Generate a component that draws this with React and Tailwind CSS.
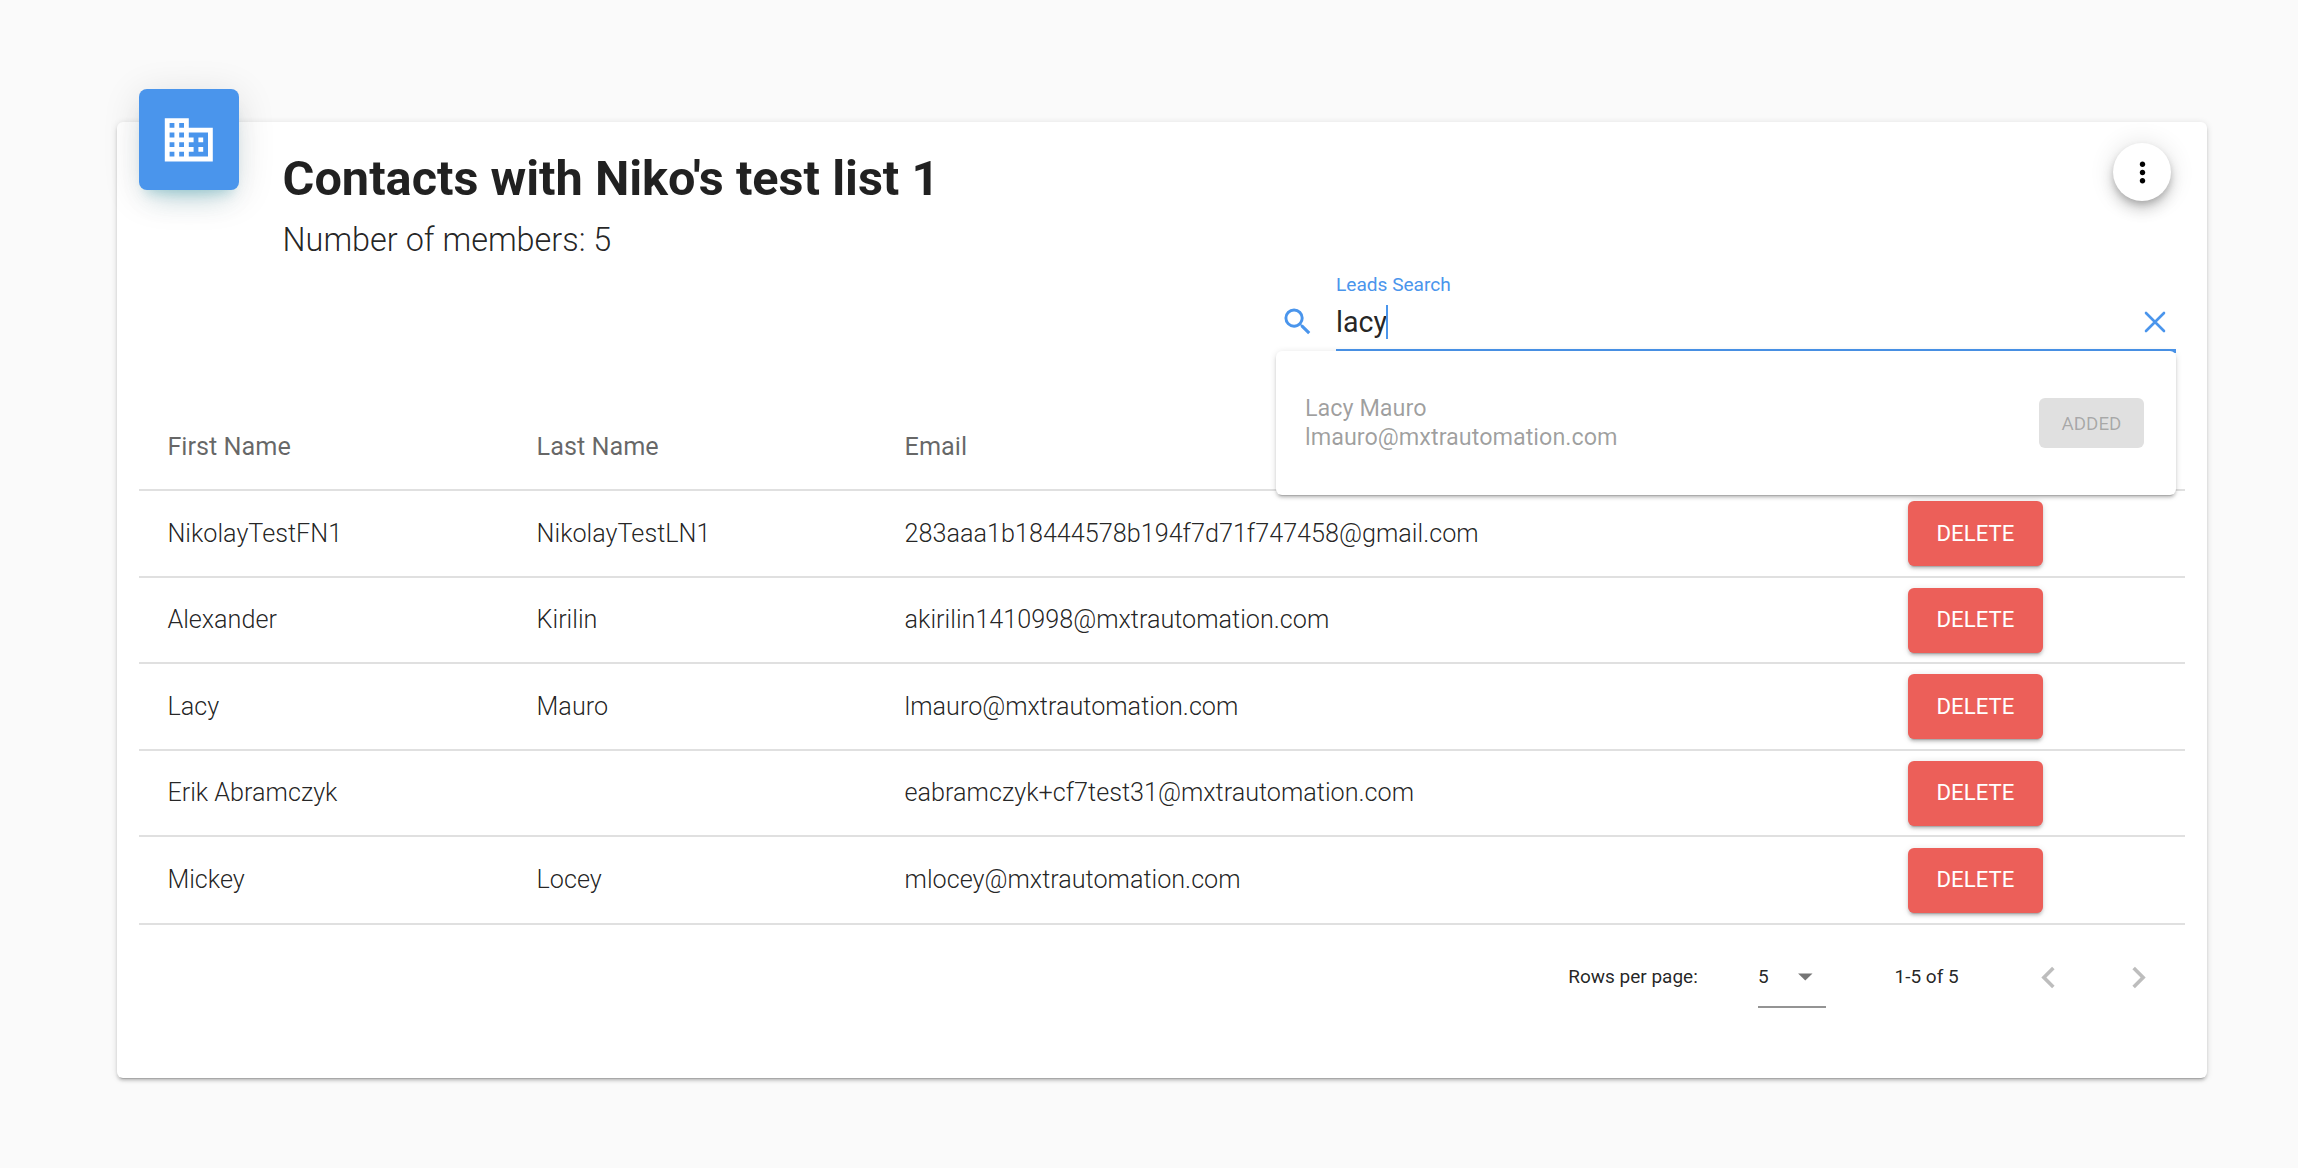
import React from "react";
import {
  MdArrowDropDown,
  MdBusiness,
  MdChevronLeft,
  MdChevronRight,
  MdMoreVert,
  MdSearch,
} from "react-icons/md";

const COLUMNS = "grid grid-cols-[369.2px_368px_1003.4px_1fr] pl-[28.4px]";

const contacts = [
  { first: "NikolayTestFN1", last: "NikolayTestLN1", email: "283aaa1b18444578b194f7d71f747458@gmail.com", height: "h-[87px]" },
  { first: "Alexander", last: "Kirilin", email: "akirilin1410998@mxtrautomation.com", height: "h-[86px]" },
  { first: "Lacy", last: "Mauro", email: "lmauro@mxtrautomation.com", height: "h-[87px]" },
  { first: "Erik Abramczyk", last: "", email: "eabramczyk+cf7test31@mxtrautomation.com", height: "h-[86px]" },
  { first: "Mickey", last: "Locey", email: "mlocey@mxtrautomation.com", height: "h-[88px]" },
];

function CloseIcon() {
  return (
    <svg viewBox="0 0 24 24" className="size-6" fill="none" stroke="currentColor" strokeWidth="2.6" strokeLinecap="round">
      <path d="M3 3L21 21M21 3L3 21" />
    </svg>
  );
}

function Header() {
  return (
    <header className="flex h-[148px] items-start">
      <div className="-mt-[33px] ml-[22px] flex h-[101px] w-[100px] items-center justify-center rounded-[8px] bg-[#4a95ec] text-white shadow-[0_17px_29px_-14px_rgba(0,140,160,0.28),0_6px_38px_0_rgba(0,0,0,0.12),0_10px_12px_-7px_rgba(0,140,160,0.2)]">
        <MdBusiness className="size-[57.6px]" />
      </div>
      <div className="ml-[43.6px] pt-[25px]">
        <h1 className="h-16 text-[48.65px] leading-[64px] font-bold">Contacts with Niko&apos;s test list 1</h1>
        <p className="mt-[5px] h-12 text-[32.4px] leading-[48px] font-light">Number of members: 5</p>
      </div>
      <button className="mt-[21px] mr-9 ml-auto flex size-[58px] items-center justify-center rounded-full bg-white text-black shadow-[0_4px_7px_-1px_rgba(0,0,0,0.2),0_9px_14px_0_rgba(0,0,0,0.14),0_1px_26px_0_rgba(0,0,0,0.12)]">
        <MdMoreVert className="size-[33px]" />
      </button>
    </header>
  );
}

function SearchResults() {
  return (
    <div className="absolute top-[81px] left-0 z-10 flex h-[144px] w-full items-start justify-between rounded-[6px] bg-white pr-8 pl-[29px] shadow-[0_4px_1.4px_-3px_rgba(0,0,0,0.2),0_3px_3px_0_rgba(0,0,0,0.14),0_1px_7px_0_rgba(0,0,0,0.12)]">
      <div className="pt-[43px] text-[23.4px] leading-[29px] text-black/38">
        <div>Lacy Mauro</div>
        <div>lmauro@mxtrautomation.com</div>
      </div>
      <button className="mt-[47px] flex h-[50px] w-[105px] items-center justify-center rounded-[6px] bg-[#e0e0e0] pt-0.5 text-[18.8px] text-black/26">
        ADDED
      </button>
    </div>
  );
}

function LeadsSearch() {
  return (
    <div className="relative mr-[31px] ml-auto flex h-[81px] w-[900px] text-[#4a95ec]">
      <div className="w-[60px] pt-[33.5px] pl-1">
        <MdSearch className="size-[35.5px]" />
      </div>
      <div className="-mb-0.5 h-[83px] flex-1 border-b-4 border-[#4a95ec]">
        <div className="pt-[3px] text-[19.1px] leading-6">Leads Search</div>
        <div className="flex h-[50px] items-center pr-[9px]">
          <span className="text-[28.6px] leading-9 text-black/87">lacy</span>
          <span className="-ml-px h-[34px] w-0.5 bg-[#4a95ec]" />
          <span className="mb-px ml-auto"><CloseIcon /></span>
        </div>
      </div>
      <SearchResults />
    </div>
  );
}

function ContactsTable() {
  return (
    <div className="mx-[22px] mt-[52px]">
      <div className={`${COLUMNS} h-[88px] items-center border-b-2 border-black/12 pt-0.5 text-[25.25px] text-black/60`}>
        <span>First Name</span>
        <span>Last Name</span>
        <span>Email</span>
      </div>
      {contacts.map((c) => (
        <div key={c.email} className={`${COLUMNS} ${c.height} items-center border-b-2 border-black/12 text-[25.2px] font-light`}>
          <span>{c.first}</span>
          <span>{c.last}</span>
          <span>{c.email}</span>
          <button className="h-[65px] w-[135px] rounded-[6px] bg-[#ec5f59] text-[22.2px] font-normal text-white shadow-[0_4px_1.4px_-3px_rgba(0,0,0,0.2),0_3px_3px_0_rgba(0,0,0,0.14),0_1px_7px_0_rgba(0,0,0,0.12)]">
            DELETE
          </button>
        </div>
      ))}
    </div>
  );
}

function Pagination() {
  return (
    <footer className="mt-[19px] flex h-16 items-center pl-[1451.2px] text-[19px]">
      <span className="w-[189.8px] pt-0.5">Rows per page:</span>
      <div className="flex h-16 w-[68px] items-center border-b-2 border-black/42 pt-0.5">
        <span className="w-[29.7px] pt-0.5">5</span>
        <MdArrowDropDown className="size-[34.6px] shrink-0 text-black/54" />
      </div>
      <span className="ml-[68.5px] w-[132.5px] pt-0.5">1-5 of 5</span>
      <MdChevronLeft className="mt-[3px] size-[43px] text-black/26" />
      <MdChevronRight className="mt-[3px] ml-[47px] size-[43px] text-black/26" />
    </footer>
  );
}

export default function App() {
  return (
    <main className="h-[1168px] w-[2298px] overflow-hidden bg-[#fafafa] pt-[122px] pl-[117px] font-['Roboto',sans-serif] text-black/87">
      <section className="h-[956px] w-[2090px] rounded-[6px] bg-white shadow-[0_4px_1.4px_-3px_rgba(0,0,0,0.2),0_3px_3px_0_rgba(0,0,0,0.14),0_1px_7px_0_rgba(0,0,0,0.12)]">
        <Header />
        <LeadsSearch />
        <ContactsTable />
        <Pagination />
      </section>
    </main>
  );
}
